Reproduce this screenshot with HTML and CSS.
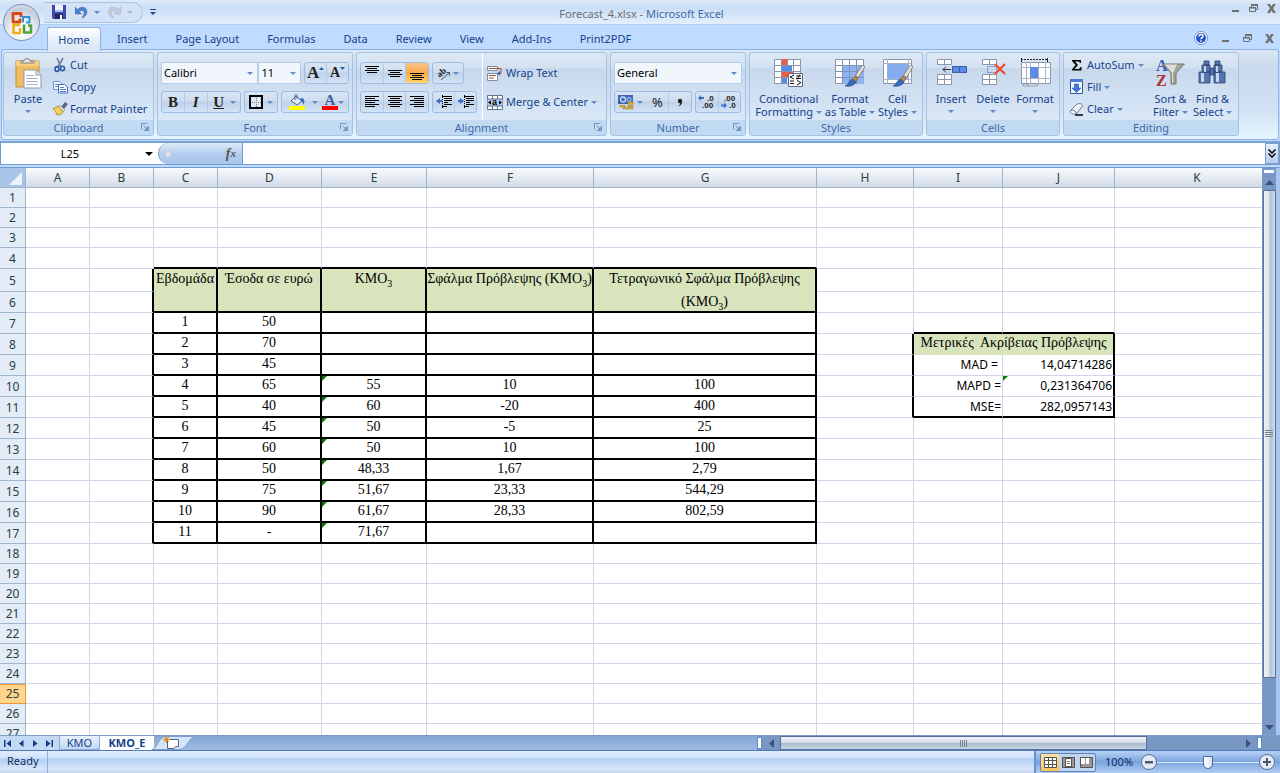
FILE: index.html
```html
<!DOCTYPE html>
<html lang="en">
<head>
<meta charset="utf-8">
<title>Forecast_4.xlsx - Microsoft Excel</title>
<link rel="stylesheet" href="styles.css">
</head>
<body>
<svg class="defs" aria-hidden="true">
  <symbol id="i-launch" viewBox="0 0 9 9"><path d="M.5 7V.5H7" fill="none" stroke="#5f86b8"/><path d="M3.500 8.500H8.500V3.500M3 3l3 3" fill="none" stroke="#5f86b8"/><path d="M4 7.500h3.500V4z" fill="#5f86b8"/></symbol>
  <symbol id="i-min" viewBox="0 0 9 9"><path d="M1 6h7v2H1z" fill="#707070"/></symbol>
  <symbol id="i-restore" viewBox="0 0 9 9"><path d="M2.500 3V1H8.500V5.500H7" fill="none" stroke="#707070"/><path d="M2 0h7v2H2zM0 3h7v1.500H0z" fill="#707070"/><path d="M.5 3.500h6v4h-6z" fill="none" stroke="#707070"/></symbol>
  <symbol id="i-close" viewBox="0 0 9 9"><path d="M0 0h3l1.500 2.500L6 0h3L6 4.300 9 9H6L4.500 6.300 3 9H0l3-4.700z" fill="#707070"/></symbol>
  <symbol id="i-brush" viewBox="0 0 20 22"><path d="M17.500 0l2.500 1.500-6.500 11-3-2z" fill="#e9e4dc" stroke="#77716a" stroke-width=".8"/><path d="M10 11l3 2-2 4-4-2z" fill="#b98a45" stroke="#74562c" stroke-width=".6"/><path d="M7 14l4 3c-2 4-6 4.500-11 4 4-1 3-5 7-7z" fill="#3c6bb8" stroke="#254d8f" stroke-width=".7"/></symbol>
</svg>

<header class="titlebar">
  <button class="office" aria-label="Office menu">
    <svg width="24" height="24" viewBox="0 0 24 24" fill="none" stroke-linejoin="round">
      <path d="M10 7.500V11H3V2.500h8V6" stroke="#d9480f" stroke-width="2.800"/>
      <path d="M14 10.500h-1V6h6.500v5.500H16" stroke="#2f8fd8" stroke-width="2"/>
      <path d="M10 14H3.500v8H10v-5" stroke="#f2b01e" stroke-width="2.600"/>
      <path d="M14 13.500v8h7v-7h-3" stroke="#4fa33a" stroke-width="2.600"/>
    </svg>
  </button>
  <div class="qat">
    <button aria-label="Save"><svg width="14" height="14" viewBox="0 0 14 14"><path d="M0 0h14v14H1l-1-1z" fill="#4146a8"/><path d="M3 0h8v7H3z" fill="#eef3ff"/><path d="M3 5h8v2H3z" fill="#a8c0f0"/><path d="M3 9h8v5H3z" fill="#20265c"/><path d="M8 10h2v4H8z" fill="#fff"/></svg></button>
    <button class="undo" aria-label="Undo"><svg width="13" height="13" viewBox="0 0 13 13"><path d="M0 1v7h6.500L4.500 6C7 3 10 5 9 8c-.4 1.500-1 2.500-2 4 3-1 5-3.500 5-6.500C12 1 6-.5 2.500 3.500z" fill="#4c82d0" stroke="#2f62b2" stroke-width=".5"/></svg></button>
    <i class="caret"></i>
    <button class="redo" aria-label="Redo"><svg width="13" height="13" viewBox="0 0 13 13"><path d="M12.500 1v7H6l2-2C5.500 3 2.500 5 3.500 8c.4 1.500 1 2.500 2 4-3-1-5-3.500-5-6.500C.5 1 6.500-.5 10 3.500z" fill="#c2cddd" stroke="#a2b1c7" stroke-width=".6"/></svg></button>
    <i class="caret pale"></i>
  </div>
  <button class="custom" aria-label="Customize toolbar"><svg width="6" height="6" viewBox="0 0 6 6"><path d="M0 0h6v1H0zM0 3h6L3 6z" fill="#2c4a80"/></svg></button>
  <h1 class="title"><span>Forecast_4.xlsx -</span> Microsoft Excel</h1>
  <div class="winbtns">
    <button aria-label="Minimize"><svg width="9" height="9"><use href="#i-min"/></svg></button>
    <button aria-label="Restore"><svg width="9" height="9"><use href="#i-restore"/></svg></button>
    <button aria-label="Close"><svg width="9" height="9"><use href="#i-close"/></svg></button>
  </div>
</header>

<nav class="tabs">
  <button class="tab active">Home</button>
  <button class="tab">Insert</button>
  <button class="tab">Page Layout</button>
  <button class="tab">Formulas</button>
  <button class="tab">Data</button>
  <button class="tab">Review</button>
  <button class="tab">View</button>
  <button class="tab">Add-Ins</button>
  <button class="tab">Print2PDF</button>
  <div class="docbtns">
    <button aria-label="Help"><svg width="14" height="14" viewBox="0 0 14 14"><circle cx="7" cy="7" r="6.500" fill="#fff" stroke="#6d93cf"/><circle cx="7" cy="7" r="5" fill="#1f55cc"/><path d="M5 5.500C5 3 9 3 9 5.200 9 6.800 7 6.500 7 8.300M7 9.300v1.400" fill="none" stroke="#fff" stroke-width="1.500"/></svg></button>
    <button aria-label="Minimize workbook"><svg width="9" height="9"><use href="#i-min"/></svg></button>
    <button aria-label="Restore workbook"><svg width="9" height="9"><use href="#i-restore"/></svg></button>
    <button aria-label="Close workbook"><svg width="9" height="9"><use href="#i-close"/></svg></button>
  </div>
</nav>

<div class="ribbon">
  <section class="group g-clip">
    <div class="body">
      <button class="big w40"><svg width="28" height="32" viewBox="0 0 28 32"><path d="M2 3h23v26H2z" fill="#efbd62" stroke="#c28d38"/><path d="M2 3h23v5H2z" fill="#f6cf85"/><path d="M7 5V3h3c0-3 6-3 6 0h4v2z" fill="#e6e6e6" stroke="#7a7a7a"/><path d="M10 12h12l5 5v13H10z" fill="#fff" stroke="#8d9ab0"/><path d="M22 12v5h5" fill="#dfe6f2" stroke="#8d9ab0"/><path d="M12 17.500h8M12 20.500h12M12 23.500h12M12 26.500h12" stroke="#a7b3c6"/></svg><span>Paste</span><i class="caret"></i></button>
      <div class="stack">
        <button class="item"><svg width="16" height="16" viewBox="0 0 16 16"><path d="M5 1l4 9M11 1L6 10" stroke="#6b7f9e" stroke-width="1.600" fill="none"/><ellipse cx="5" cy="12" rx="2" ry="2.400" fill="none" stroke="#2a58a8" stroke-width="1.600"/><ellipse cx="10.500" cy="11.500" rx="2" ry="2.200" fill="none" stroke="#2a58a8" stroke-width="1.600"/></svg>Cut</button>
        <button class="item"><svg width="16" height="16" viewBox="0 0 16 16"><path d="M1.500 2.500h6l2 2v6h-8z" fill="#f5f9ff" stroke="#6d93cf"/><path d="M3 5.500h4M3 7.500h5" stroke="#6d93cf"/><path d="M6.500 5.500h6l3 2.500v6h-9z" fill="#fff" stroke="#3e6cba"/><path d="M8 8.500h4M8 10.500h6M8 12.500h6" stroke="#5280ca"/></svg>Copy</button>
        <button class="item"><svg width="16" height="16" viewBox="0 0 16 16"><path d="M13 1l3 2-4 5-3-2z" fill="#5a6482"/><path d="M8 4l5 5-2 2-5-5z" fill="#d7d7d7" stroke="#888" stroke-width=".6"/><path d="M6 5L1 8c2 1 3 3 4 6 3 0 5-1 6-3z" fill="#f2d15c" stroke="#a8801c" stroke-width=".8"/></svg>Format Painter</button>
      </div>
    </div>
    <footer><h2>Clipboard</h2><button class="launch" aria-label="Clipboard options"><svg width="8" height="8"><use href="#i-launch"/></svg></button></footer>
  </section>

  <section class="group g-font">
    <div class="body rows">
      <div class="row">
        <div class="combo wide"><select aria-label="Font"><option>Calibri</option></select><i class="caret"></i></div>
        <div class="combo small"><select aria-label="Font size"><option>11</option></select><i class="caret"></i></div>
        <div class="bar growth"><button class="glyph grow" aria-label="Grow font">A<svg width="5" height="12"><path d="M0 3l2.500-3L5 3z" fill="#2f5aa6"/></svg></button><button class="glyph shrink" aria-label="Shrink font">A<svg width="5" height="12"><path d="M0 0h5L2.500 3z" fill="#2f5aa6"/></svg></button></div>
      </div>
      <div class="row spaced">
        <div class="bar biu"><button class="glyph b">B</button><button class="glyph it">I</button><button class="glyph u">U</button><i class="caret"></i></div>
        <div class="bar brd"><button aria-label="Borders"><svg width="14" height="14" viewBox="0 0 14 14"><path d="M1 1h12v12H1z" fill="#dce8f8" stroke="#000" stroke-width="2"/><path d="M3 7.500h9M7.500 3v9" stroke="#777" stroke-dasharray="1 1"/></svg></button><i class="caret"></i></div>
        <div class="bar cols"><button aria-label="Fill color"><svg width="17" height="16" viewBox="0 0 17 16"><path d="M0 12h16v4H0z" fill="#ff0"/><path d="M7 2l6 5-5 4-6-4z" fill="#dfeaf8" stroke="#51668c"/><path d="M6 6V1.500C6 0 8 0 8 2v3" fill="none" stroke="#51668c"/><path d="M12 4c4 0 4 4 2.500 6.500C13.500 9 14 7 11 6z" fill="#3c6cc0"/></svg></button><i class="caret"></i><button class="glyph fcol" aria-label="Font color">A</button><i class="caret"></i></div>
      </div>
    </div>
    <footer><h2>Font</h2><button class="launch" aria-label="Font options"><svg width="8" height="8"><use href="#i-launch"/></svg></button></footer>
  </section>

  <section class="group g-align">
    <div class="body">
      <div class="rows">
        <div class="row spaced">
          <div class="bar three"><button aria-label="Top align"><svg width="14" height="16"><path d="M0 1.500h14M2 3.500h10M0 5.500h14M2 7.500h10" stroke="#000"/></svg></button><button aria-label="Middle align"><svg width="14" height="16"><path d="M0 5.500h14M2 7.500h10M0 9.500h14M2 11.500h10" stroke="#000"/></svg></button><button class="on" aria-label="Bottom align"><svg width="14" height="16"><path d="M0 8.500h14M2 10.500h10M0 12.500h14M2 14.500h10" stroke="#000"/></svg></button></div>
          <div class="bar ori"><button aria-label="Orientation"><svg width="18" height="18" viewBox="0 0 18 18"><text x="3" y="11" transform="rotate(-40 8 9)" class="abt">ab</text><path d="M7 16L15.500 8.500M15.500 8.500h-3M15.500 8.500v3" fill="none" stroke="#555"/></svg></button><i class="caret"></i></div>
        </div>
        <div class="row spaced">
          <div class="bar three"><button aria-label="Align left"><svg width="14" height="12"><path d="M0 .5h14M0 2.500h10M0 4.500h14M0 6.500h10M0 8.500h14M0 10.500h10" stroke="#000"/></svg></button><button aria-label="Center"><svg width="14" height="12"><path d="M0 .5h14M2 2.500h10M0 4.500h14M2 6.500h10M0 8.500h14M2 10.500h10" stroke="#000"/></svg></button><button aria-label="Align right"><svg width="14" height="12"><path d="M0 .5h14M4 2.500h10M0 4.500h14M4 6.500h10M0 8.500h14M4 10.500h10" stroke="#000"/></svg></button></div>
          <div class="bar two"><button aria-label="Decrease indent"><svg width="16" height="14" viewBox="0 0 16 14"><path d="M6.500 0v14" stroke="#000" stroke-dasharray="1 1"/><path d="M6 1.500h10M8 3.500h8M8 5.500h8M8 7.500h4M8 9.500h8M6 11.500h5" stroke="#000"/><path d="M0 6l4-3v2h2v2H4v2z" fill="#3c6cc8"/></svg></button><button aria-label="Increase indent"><svg width="16" height="14" viewBox="0 0 16 14"><path d="M6.500 0v14" stroke="#000" stroke-dasharray="1 1"/><path d="M6 1.500h10M8 3.500h8M8 5.500h8M8 7.500h4M8 9.500h8M6 11.500h5" stroke="#000"/><path d="M6 6L2 3v2H0v2h2v2z" fill="#3c6cc8"/></svg></button></div>
        </div>
      </div>
      <div class="rows merge">
        <button class="item"><svg width="16" height="15" viewBox="0 0 16 15"><path d="M.5.5h10v4H.5zM.5 7.500h10v7H.5z" fill="#fff" stroke="#7f8ca3"/><path d="M2 2.500h12v5h-2" fill="none" stroke="#a0522d"/><path d="M13 5l-3 2.500 3 2z" fill="#2f5aa6"/><path d="M2 9.500h7M2 12h5" stroke="#a0522d"/></svg>Wrap Text</button>
        <button class="item"><svg width="16" height="15" viewBox="0 0 16 15"><path d="M.5.500h15v14H.5z" fill="#fff" stroke="#60728f"/><path d="M5.500.5v3.500M10.500.5v3.500M5.500 11v3.500M10.500 11v3.500" stroke="#60728f"/><path d="M0 4h16v7H0z" fill="#b7cdec" stroke="#60728f"/><path d="M1 7.500l3-2v4zM15 7.500l-3-2v4z" fill="#000"/><text x="5" y="10" class="at">a</text></svg>Merge &amp; Center<i class="caret"></i></button>
      </div>
    </div>
    <footer><h2>Alignment</h2><button class="launch" aria-label="Alignment options"><svg width="8" height="8"><use href="#i-launch"/></svg></button></footer>
  </section>

  <section class="group g-num">
    <div class="body rows">
      <div class="row"><div class="combo full"><select aria-label="Number format"><option>General</option></select><i class="caret"></i></div></div>
      <div class="row spaced">
        <div class="bar cur"><button aria-label="Currency"><svg width="16" height="16" viewBox="0 0 16 16"><path d="M0 1h15v9H0z" fill="#3d69b4"/><circle cx="5" cy="5.500" r="2.500" fill="none" stroke="#c8daf6" stroke-width="1.300"/><circle cx="11" cy="5.500" r="2" fill="none" stroke="#c8daf6"/><path d="M10 8h5v2h-5zM10 11h5v1.500h-5zM9 13.500h6v1.500H9zM2 11.500h5v1.500H2zM5 13.500h3V15H5z" fill="#f0c030" stroke="#9a6e10" stroke-width=".5"/></svg></button><i class="caret"></i><button class="glyph pct">%</button><button aria-label="Comma style"><svg width="6" height="9"><circle cx="3" cy="3" r="2.200" fill="#222"/><path d="M5.200 3c0 3-1.500 4.500-3.700 5.500 1.200-1.500 1.700-2.500 1.500-4z" fill="#222"/></svg></button></div>
        <div class="bar dec"><button aria-label="Increase decimal"><svg width="18" height="16" viewBox="0 0 18 16"><path d="M0 4l3-3v2h3v2H3v2z" fill="#3c6cc8"/><text x="9" y="7" class="dt">.0</text><text x="4" y="14" class="dt">.00</text></svg></button><button aria-label="Decrease decimal"><svg width="18" height="16" viewBox="0 0 18 16"><path d="M7 11.500l-3-3v2H1v2h3v2z" fill="#3c6cc8"/><text x="4" y="7" class="dt">.00</text><text x="9" y="14" class="dt">.0</text></svg></button></div>
      </div>
    </div>
    <footer><h2>Number</h2><button class="launch" aria-label="Number options"><svg width="8" height="8"><use href="#i-launch"/></svg></button></footer>
  </section>

  <section class="group g-styles">
    <div class="body bigs">
      <button class="big w70"><svg width="31" height="30" viewBox="0 0 31 30"><path d="M1.500 1.500h26v24h-26z" fill="#fff" stroke="#8896ae"/><path d="M8 1h6v24H8z" fill="#f15b40"/><path d="M8 7h11v6H8z" fill="#5a8ae8"/><path d="M8 13h12v6H8z" fill="#f15b40"/><path d="M8 19h6v6H8z" fill="#5a8ae8"/><path d="M1 7.500h27M1 13.500h27M1 19.500h27M8.500 1v25M14.500 1v6M20.500 1v25" stroke="#8896ae" fill="none"/><path d="M15.500 15.500h14v13h-14z" fill="#fff" stroke="#5d6b84"/><path d="M21 17l-4 2 4 2M17 23h4M23 18h5M23 20.500h5M27 16.500l-3 5M24 22.500l4 2-4 2.500M17 25.500h4" fill="none" stroke="#111"/></svg><span>Conditional</span><span>Formatting <i class="caret"></i></span></button>
      <button class="big w50"><svg width="31" height="30" viewBox="0 0 31 30"><path d="M1.500 1.500h28v24h-28z" fill="#fff" stroke="#8896ae"/><path d="M8 7h22v19H8z" fill="#8fb2f0"/><path d="M1 7.500h29M1 13.500h29M1 19.500h29M8.500 1v25M15.500 1v25M22.500 1v25" stroke="#7f93b8"/><use href="#i-brush" x="11" y="7" width="20" height="22"/></svg><span>Format</span><span>as Table <i class="caret"></i></span></button>
      <button class="big w40"><svg width="31" height="30" viewBox="0 0 31 30"><path d="M1.500 1.500h28v24h-28z" fill="#fff" stroke="#8896ae"/><path d="M1 5.500h29M1 21.500h29M5.500 1v25M26.500 1v25" stroke="#a5b0c6"/><path d="M6 6h20v15H6z" fill="#86acf0"/><use href="#i-brush" x="11" y="7" width="20" height="22"/></svg><span>Cell</span><span>Styles <i class="caret"></i></span></button>
    </div>
    <footer><h2>Styles</h2></footer>
  </section>

  <section class="group g-cells">
    <div class="body bigs">
      <button class="big w40"><svg width="31" height="30" viewBox="0 0 31 30"><path d="M1.500 1.500h14v5h-14zM1.500 16.500h14v10h-14z" fill="#fff" stroke="#8896ae"/><path d="M8.500 1v6M8.500 16v11M1 21.500h15" stroke="#8896ae"/><path d="M16.500 8.500h14v6h-14z" fill="#5c8be6" stroke="#3a5da6"/><path d="M23.500 8v7" stroke="#3a5da6"/><path d="M7 11.500h8M10 8.500l-3 3 3 3" fill="none" stroke="#333"/></svg><span>Insert</span><i class="caret"></i></button>
      <button class="big w40"><svg width="31" height="30" viewBox="0 0 31 30"><path d="M4.500 1.500h14v5h-14zM4.500 16.500h14v10h-14z" fill="#fff" stroke="#8896ae"/><path d="M11.500 1v6M11.500 16v11M4 21.500h15" stroke="#8896ae"/><path d="M9.500 8.500h9v6h-9z" fill="none" stroke="#3a5da6" stroke-dasharray="1 1"/><path d="M17 6l10 10M27 6L17 16" stroke="#f04a2a" stroke-width="2.200"/></svg><span>Delete</span><i class="caret"></i></button>
      <button class="big w40"><svg width="31" height="30" viewBox="0 0 31 30"><path d="M1 1.500h27" stroke="#222" stroke-dasharray="2 1"/><path d="M1.500 0v4M27.500 0v4" stroke="#222"/><path d="M1.500 4.500h29v21h-29z" fill="#fff" stroke="#8896ae"/><path d="M1 9.500h30M1 20.500h30M6.500 4v22M10.500 4v22M18.500 4v22M25.500 4v22" stroke="#a5b0c6"/><path d="M10 9h8v11h-8z" fill="#5c8be6"/><path d="M3 26h5l1 2h8l1-2h-8M3 26v2h6" fill="#fff" stroke="#8896ae"/></svg><span>Format</span><i class="caret"></i></button>
    </div>
    <footer><h2>Cells</h2></footer>
  </section>

  <section class="group g-edit">
    <div class="body">
      <div class="stack">
        <button class="item"><svg width="15" height="16" viewBox="0 0 15 16"><path d="M3 3h9v3h-1L10 4.500H6L9 8l-3.500 4H10l1.500-2h1v3.500H3V12.500L6.500 8 3 4z" fill="#000"/></svg>AutoSum <i class="caret"></i></button>
        <button class="item"><svg width="15" height="16" viewBox="0 0 15 16"><path d="M1.500.5h12v14h-12z" fill="#f3f8ff" stroke="#35589c"/><path d="M1 0h13v3H1z" fill="#4d7ad0"/><path d="M5.500 5h4v4H12l-4.500 4.500L3 9h2.500z" fill="#3f76dc" stroke="#2452a8" stroke-width=".6"/></svg>Fill <i class="caret"></i></button>
        <button class="item"><svg width="15" height="16" viewBox="0 0 15 16"><path d="M1 10l7-7c3-1 6 0 5.500 2L8 12c-3 2-7 1-7-2z" fill="#f2f4f8" stroke="#6c7a92"/><path d="M1.500 9.500c2-1 5 0 6 2.500" fill="none" stroke="#6c7a92"/><path d="M6 14h8" stroke="#000" stroke-width="1.500"/></svg>Clear <i class="caret"></i></button>
      </div>
      <button class="big w40 sort"><svg width="31" height="30" viewBox="0 0 31 30"><text x="1" y="13" class="sa">A</text><text x="1" y="28" class="sz">Z</text><path d="M7.500 6h22L21 15v11h-5V15z" fill="#a4a49c" stroke="#77776f"/><path d="M10 6.500h12L18 15v10h-1V15z" fill="#deded8"/></svg><span>Sort &amp;</span><span>Filter <i class="caret"></i></span></button>
      <button class="big w40"><svg width="31" height="30" viewBox="0 0 31 30"><path d="M7 3h5v4h-5zM18 3h5v4h-5zM5 7h8v7H5zM17 7h8v7h-8zM2 14h11v11H2zM17 14h11v11H17zM13 10h4v7h-4z" fill="#5475ac" stroke="#2c4474" stroke-width=".8"/><path d="M4 15h3v9H4zM19 15h3v9h-3zM7 8h2v6H7zM19 8h2v6h-2z" fill="#c7d7f2"/></svg><span>Find &amp;</span><span>Select <i class="caret"></i></span></button>
    </div>
    <footer><h2>Editing</h2></footer>
  </section>
</div>

<div class="formulabar">
  <div class="namebox"><input type="text" value="L25" aria-label="Name box"><i class="caret black"></i></div>
  <div class="fx"><span class="knob"></span><button>f<sub>x</sub></button></div>
  <input class="formula" type="text" aria-label="Formula">
  <button class="expand" aria-label="Expand formula bar"><svg width="8" height="9" viewBox="0 0 8 9"><path d="M.5.5L4 4 7.500.5M.5 4.500L4 8l3.500-3.500" fill="none" stroke="#000" stroke-width="1.500"/></svg></button>
</div>

<main class="work">
  <div class="sheet"><table class="grid"><colgroup id="cols"></colgroup><thead><tr id="letters"></tr></thead><tbody id="cells"></tbody></table></div>
  <div class="vscroll" role="scrollbar" aria-controls="cells" aria-valuenow="0">
    <span class="vsplit"></span>
    <button aria-label="Scroll up"><svg width="9" height="5"><path d="M0 5L4.500 0 9 5z" fill="#3d4f7c"/></svg></button>
    <div class="vthumb"><span></span></div>
    <button aria-label="Scroll down" class="down"><svg width="9" height="5"><path d="M0 0h9L4.500 5z" fill="#3d4f7c"/></svg></button>
  </div>
</main>

<div class="sheetbar">
  <div class="navs">
    <button aria-label="First sheet"><svg width="7" height="7"><path d="M0 0h1.500v7H0zM7 0v7L2.500 3.500z" fill="#123c86"/></svg></button>
    <button aria-label="Previous sheet"><svg width="7" height="7"><path d="M5.500 0v7L1 3.500z" fill="#123c86"/></svg></button>
    <button aria-label="Next sheet"><svg width="7" height="7"><path d="M1 0v7l4.500-3.500z" fill="#123c86"/></svg></button>
    <button aria-label="Last sheet"><svg width="7" height="7"><path d="M0 0v7l4.500-3.500zM5.500 0H7v7H5.500z" fill="#123c86"/></svg></button>
  </div>
  <button class="stab">KMO</button>
  <button class="stab current">KMO_E</button>
  <button class="newtab" aria-label="Insert worksheet"><svg width="44" height="14" viewBox="0 0 44 14"><path d="M0 13.500C6 12 6 1 14 .5h29C36 2 36 12 28 13.500z" fill="#d5e4f8" stroke="#7f9fcd"/><path d="M15.500 3.500h11v7h-3l-1.500 2h-6.500z" fill="#fff" stroke="#54688f"/><path d="M14.500 0v7M11 3.500h7M12 1l5 5M17 1l-5 5" stroke="#e08a1c"/></svg></button>
  <div class="hscroll">
    <span class="hsplit"></span>
    <button aria-label="Scroll left"><svg width="5" height="9"><path d="M5 0v9L0 4.500z" fill="#3d4f7c"/></svg></button>
    <div class="htrack"><div class="hthumb"><span></span></div></div>
    <button aria-label="Scroll right"><svg width="5" height="9"><path d="M0 0v9l5-4.500z" fill="#3d4f7c"/></svg></button>
    <span class="hsplit"></span>
  </div>
</div>

<footer class="status">
  <span class="ready">Ready</span>
  <div class="statusright">
    <div class="views">
      <button class="on" aria-label="Normal view"><svg width="13" height="11"><path d="M.5.5h12v10H.5z" fill="#fff" stroke="#56534a"/><path d="M0 3.500h13M0 7.500h13M4.500 0v11M8.500 0v11" stroke="#56534a"/></svg></button>
      <button aria-label="Page layout view"><svg width="13" height="11"><path d="M.5.5h12v10H.5z" fill="#999" stroke="#56534a"/><path d="M3.500 1.500h6v8h-6z" fill="#fff" stroke="#56534a"/><path d="M5 4.500h3M5 6.500h3" stroke="#777"/></svg></button>
      <button aria-label="Page break view"><svg width="13" height="11"><path d="M.5.5h12v10H.5z" fill="#999" stroke="#56534a"/><path d="M1 1h4v6H1zM6 1h3v6H6z" fill="#fff"/></svg></button>
    </div>
    <button class="pctbtn">100%</button>
    <button class="round" aria-label="Zoom out"><svg width="16" height="16"><circle cx="8" cy="8" r="7.500" fill="#e3ebf6" stroke="#5a6f92"/><path d="M4 7h8v2.500H4z" fill="#4a5872"/></svg></button>
    <input type="range" min="0" max="100" value="50" aria-label="Zoom">
    <button class="round" aria-label="Zoom in"><svg width="16" height="16"><circle cx="8" cy="8" r="7.500" fill="#e3ebf6" stroke="#5a6f92"/><path d="M4 7h3V4h2v3h3v2H9v3H7V9H4z" fill="#4a5872"/></svg></button>
  </div>
</footer>
<script src="sheet.js"></script>
</body>
</html>
```

FILE: styles.css
```css
* { box-sizing: border-box; }
html, body { height: 100%; margin: 0; }
body {
  display: flex; flex-direction: column; overflow: hidden;
  background: #bfdbff; color: #15428b;
  font: 11px/14px "Noto Sans", "Liberation Sans", sans-serif;
}
button, input, select {
  font: inherit; color: inherit; background: none; border: 0; padding: 0; margin: 0;
}
button { display: flex; align-items: center; justify-content: center; white-space: nowrap; }
h1, h2 { font: inherit; margin: 0; }
svg { display: block; flex: none; }
.defs { position: absolute; width: 0; height: 0; }
.caret {
  display: inline-block; flex: none; width: 0; height: 0;
  border: 3px solid transparent; border-top-color: #5f8cc4; border-bottom: 0;
}
.caret.pale { border-top-color: #a9b9d0; }
.caret.black { border-width: 4px; border-top-color: #000; border-bottom: 0; }

/* title bar */
.titlebar {
  position: relative; flex: none; height: 25px; display: flex; align-items: center;
  padding: 0 4px 0 44px;
  background: linear-gradient(#dfebfa, #d3e3f9 4px, #cadef7 8px, #e4effd);
  border-bottom: 1px solid #b0cff7;
}
.office {
  position: absolute; z-index: 2; left: 3px; top: 4px; width: 37px; height: 37px;
  border-radius: 50%; border: 1px solid #7d8fae;
  background: radial-gradient(circle at 50% 75%, #fff, #eef1f6 35%, #c4cddc 70%, #f4f6fa);
}
.qat {
  display: flex; align-items: center; height: 21px; width: 99px; padding-left: 8px; gap: 6px;
  background: #d3e2f6; border: 1px solid #a9c4e8; border-left: 0; border-radius: 0 11px 11px 0;
}
.qat .undo { margin-left: 3px; }
.qat .redo { margin-left: 2px; }
.custom { margin-left: 7px; }
.title { flex: 1; text-align: center; color: #3e6aaa; padding: 4px 104px 0 0; }
.title span { color: #6b6e75; }
.winbtns { display: flex; gap: 9px; align-self: flex-start; padding-top: 4px; }

/* ribbon tabs */
.tabs { flex: none; display: flex; height: 24px; padding: 2px 6px 0 47px; background: #bfdbff; }
.tab { padding: 0 14px; height: 23px; }
.tab.active {
  position: relative; z-index: 1; width: 54px; padding: 0; height: 24px; margin-right: 2px;
  background: linear-gradient(#fff, #e6effa 50%, #dbe6f4);
  border: 1px solid #8db2e3; border-bottom: 0; border-radius: 3px 3px 0 0;
}
.docbtns { margin-left: auto; display: flex; align-items: center; gap: 13px; }

/* ribbon */
.ribbon {
  flex: none; display: flex; gap: 3px; height: 91px; margin: 0 1px; padding: 2px 1px 3px;
  border: 1px solid #8db2e3; border-radius: 3px;
  background: linear-gradient(#dbe6f4, #c9d9ed 18px, #d2e1f3 60px, #e3f4ff 85px);
}
.group {
  display: flex; flex-direction: column; border: 1px solid #a5c1e3; border-radius: 3px;
  background: linear-gradient(#dde8f5, #d4e1f1 14px, #c8d8ec 16px, #d9e7f7 66px);
}
.g-clip { width: 151px; }
.g-font { width: 196px; }
.g-align { width: 251px; }
.g-num { width: 136px; }
.g-styles { width: 174px; }
.g-cells { width: 134px; }
.g-edit { width: 176px; }
.group .body { flex: 1; display: flex; padding: 0 3px; }
.group footer {
  flex: none; height: 15px; display: flex; align-items: center; justify-content: center;
  background: #c1d9f1; color: #3e6aaa; border-radius: 0 0 3px 3px;
}
.group footer h2 { flex: 1; text-align: center; }
.launch { margin: 0 4px 2px -12px; }
.big { flex-direction: column; justify-content: flex-start; padding-top: 5px; line-height: 13px; }
.big svg { margin-bottom: 4px; }
.g-clip .big svg { margin-bottom: 2px; }
.big > .caret { margin-top: 5px; }
.bigs { justify-content: space-around; }
.big .caret { vertical-align: 2px; }
.w70 { width: 70px; }
.w50 { width: 50px; }
.w40 { width: 42px; }
.stack { display: flex; flex-direction: column; justify-content: space-between; padding: 3px 0 2px; }
.g-clip .stack { margin-left: 3px; }
.g-edit .stack { margin-left: 2px; }
.sort { margin-left: 6px; }
.item { justify-content: flex-start; gap: 3px; height: 18px; }
.g-clip .item { gap: 2px; }
.body.rows { padding: 9px 3px 0; }
.rows, .body.rows { display: flex; flex-direction: column; gap: 7px; }
.g-align .rows { padding-top: 9px; }
.row { display: flex; }
.spaced { gap: 3px; }
.combo {
  display: flex; align-items: center; height: 22px; padding: 0 4px 0 2px;
  background: #f1f6fc; border: 1px solid #b3cdec; color: #000;
}
.combo select { appearance: none; flex: 1; min-width: 0; }
.wide { width: 98px; }
.combo.small { width: 43px; }
.full { width: 128px; }
.bar {
  display: flex; align-items: center; height: 22px;
  border: 1px solid #9dbce2; border-radius: 3px;
  background: linear-gradient(#d8e5f5, #cddcee 45%, #bfd1e9 50%, #d3e3f6);
}
.bar button { height: 20px; flex: 1; }
.bar button + button { border-left: 1px solid #b5cae5; }
.bar .caret { margin-right: 4px; }
.growth { width: 45px; margin-left: 3px; }
.biu { width: 80px; }
.brd { width: 35px; }
.cols { width: 68px; }
.three { width: 69px; }
.ori { width: 32px; }
.two { width: 45px; }
.cur { width: 78px; }
.dec { width: 46px; }
.bar .on { background: linear-gradient(#f8c48a, #fba94c 50%, #ffd76b); }
.glyph { font: bold 15px/18px "Liberation Serif", serif; color: #222; }
.grow { font-size: 17px; }
.shrink { font-size: 14px; }
.it { font-style: italic; }
.u { text-decoration: underline; }
.fcol { color: #3c5f9e; line-height: 13px; }
.bar .fcol { flex: none; width: 16px; height: 16px; border: 0; border-bottom: 4px solid #f00; }
.pct { font: 13px "Noto Sans", sans-serif; }
.abt { font: bold 9px "Liberation Serif", serif; fill: #222; }
.at { font: bold 9px "Liberation Sans", sans-serif; fill: #000; }
.dt { font: bold 8px "Liberation Sans", sans-serif; fill: #222; }
.sa { font: bold 16px "Liberation Serif", serif; fill: #2e5cb4; }
.sz { font: bold 16px "Liberation Serif", serif; fill: #a83232; }
.merge { border-left: 1px solid #fff; margin: 0 0 0 5px; padding-left: 4px; }
.merge .item { height: 22px; }

/* formula bar */
.formulabar {
  flex: none; display: flex; height: 24px; margin-top: 1px; color: #000;
  background: #fff; border: 2px solid #6f9bd0; border-width: 2px 1px 1px; border-top-color: #7ba2cf;
}
.namebox { display: flex; align-items: center; width: 157px; padding-right: 5px; }
.namebox input { flex: 1; min-width: 0; text-align: center; padding-right: 6px; }
.fx {
  display: flex; justify-content: space-between; align-items: center; width: 85px; padding: 0 6px 0 5px;
  background: linear-gradient(#dce9f8, #b2ccee 55%, #a9c5ea); border-right: 1px solid #6f9bd0;
  border-left: 1px solid #7d9fce; border-radius: 10px 0 0 10px;
}
.knob { width: 8px; height: 8px; border-radius: 50%; background: radial-gradient(#eee, #aebbd0); }
.fx button { font: italic bold 14px/16px "Liberation Serif", serif; color: #555; }
.fx sub { font-size: 11px; line-height: 11px; }
.formula { flex: 1; min-width: 0; padding: 0 4px; }
.expand { width: 14px; background: linear-gradient(#e6effa, #b7cdea); border: 1px solid #7d9fce; }

/* worksheet */
.work { flex: 1; min-height: 0; display: flex; margin-top: 2px; border-top: 1px solid #6f9bd0; }
.sheet { flex: 1; min-width: 0; overflow: hidden; background: #fff; }
.grid { width: calc(100% + 18px); table-layout: fixed; border-collapse: separate; border-spacing: 0; color: #000; }
.grid th, .grid td { padding: 0; border: 0 solid #d0d5ea; border-width: 0 1px 1px 0; overflow: hidden; white-space: nowrap; }
.grid th { font: 12px/16px "Noto Sans", sans-serif; color: #27413e; border-color: #9eb6ce; padding-top: 1px; }
.grid thead th { height: 20px; background: linear-gradient(#f8fafc, #e3e8f1 60%, #d3dbe9); }
.grid tbody th { background: #e4ecf7; }
.grid tbody th.sel { background: #ffd58d; border-color: #f29536; box-shadow: inset 0 1px #f29536; }
.grid thead .corner { background: #a9c4e9; }
.corner svg { margin: 0 0 0 9px; }
.grid td { position: relative; font: 14px/18px "Liberation Serif", serif; text-align: center; vertical-align: top; }
.grid td.box { border-color: #000; border-right-width: 2px; border-bottom-width: 2px; }
.grid td.bl { border-right: 2px solid #000; }
.grid td.bt { border-bottom: 2px solid #000; }
.grid td.head { background: #d8e4bc; line-height: 19px; }
.grid td.title2 { border-right: 2px solid #000; border-bottom: 0; background: #d8e4bc; }
.grid td.head.tall { white-space: normal; padding: 0 10px; }
.tall span { display: block; margin-top: 4px; }
.grid td sub { font-size: 10px; line-height: 1px; }
.grid td.num { font: 12px/18px "Noto Sans", sans-serif; text-align: right; padding: 1px 1px 0 0; }
.grid td.flag::before {
  content: ""; position: absolute; left: 0; top: 0;
  border: 5px solid #008000; border-width: 5px 5px 0 0; border-right-color: transparent;
}
.vscroll {
  flex: none; width: 18px; display: flex; flex-direction: column; align-items: center;
  padding: 0 0 4px; background: #7897c2; border-right: 4px solid #a9c6ee;
}
.vsplit { width: 12px; height: 5px; margin-top: 1px; background: #fff; border: 1px solid #6f9bd0; }
.vscroll button { height: 16px; }
.vthumb {
  height: 488px; width: 13px; border: 1px solid #5a6f9a; border-radius: 1px;
  display: flex; align-items: center; justify-content: center;
  background: linear-gradient(90deg, #eef1f5, #dfe5ed 40%, #b4c3d6 60%, #d6dfea);
}
.vthumb span { width: 8px; height: 8px; background: repeating-linear-gradient(#7a8290 0 1px, transparent 1px 2px); }
.vscroll .down { margin-top: auto; height: 8px; }

/* sheet tabs */
.sheetbar {
  flex: none; display: flex; height: 16px; background: linear-gradient(#84a6d2, #9fbbe2);
  border-top: 1px solid #7b9dcb; border-bottom: 1px solid #4a7abd;
}
.navs { display: flex; width: 59px; padding-left: 4px; gap: 7px; background: #c4d9f4; }
.stab { width: 41px; background: linear-gradient(#e8f1fc, #c2d8f4); border: 1px solid #8aa9d4; border-top: 0; border-radius: 0 0 4px 0; }
.current { width: 54px; background: #fff; font-weight: 700; border: 0; }
.newtab { margin-left: -2px; }
.hscroll { display: flex; align-items: center; margin-left: auto; width: 523px; padding-right: 18px; background: #7897c2; }
.hsplit { width: 5px; height: 12px; background: #fff; border: 1px solid #5f8cc4; }
.hscroll button { width: 18px; }
.htrack { flex: 1; }
.hthumb {
  width: 80%; height: 14px; display: flex; align-items: center; justify-content: center;
  border: 1px solid #5a6f9a; background: linear-gradient(#eef1f7, #d5dfea 45%, #a9bccf 55%, #c9d6e2);
}
.hthumb span { width: 8px; height: 7px; background: repeating-linear-gradient(90deg, #7a8290 0 1px, transparent 1px 2px); }

/* status bar */
.status {
  flex: none; height: 22px; display: flex; color: #0e2c5e;
  background: linear-gradient(#e2eefd, #cfe2fb 7px, #b2cff5 8px, #d7e6f9 18px, #c5d5ea);
}
.ready { padding: 3px 8px 0 7px; border-right: 1px solid #8eb0df; }
.statusright {
  margin-left: auto; display: flex; align-items: center; width: 246px; padding-left: 4px;
  border-left: 2px solid #6d93cf; background: linear-gradient(#b8d2f5, #86ade4 40%, #7ba5df 50%, #b1cef3);
}
.views { display: flex; width: 56px; height: 19px; border: 1px solid #5f82b5; border-radius: 2px; background: #c0d5f1; }
.views button { flex: 1; }
.views .on { background: linear-gradient(#fce3a8, #fbc25c); }
.pctbtn { margin: 0 8px 0 9px; }
.status input { appearance: none; flex: 1; min-width: 0; height: 16px; background: linear-gradient(#d9e7fa, #d9e7fa) center / 100% 1px no-repeat; }
.status input::-webkit-slider-thumb {
  appearance: none; width: 10px; height: 13px; background: linear-gradient(90deg, #fff, #d5e2f5);
  border: 1px solid #4a6796; border-radius: 1px 1px 5px 5px;
}
.status .round:last-child { margin-right: 5px; }
```

FILE: sheet.js
```js
const widths = [26, 64, 64, 64, 104, 105, 167, 223, 97, 89, 112, 0];
const letters = ["", "A", "B", "C", "D", "E", "F", "G", "H", "I", "J", "K"];
const data = {
  7: ["1", "50", "", "", ""],
  8: ["2", "70", "", "", ""],
  9: ["3", "45", "", "", ""],
  10: ["4", "65", "55", "10", "100"],
  11: ["5", "40", "60", "-20", "400"],
  12: ["6", "45", "50", "-5", "25"],
  13: ["7", "60", "50", "10", "100"],
  14: ["8", "50", "48,33", "1,67", "2,79"],
  15: ["9", "75", "51,67", "23,33", "544,29"],
  16: ["10", "90", "61,67", "28,33", "802,59"],
  17: ["11", "-", "71,67", "", ""]
};
const heads = [
  "Εβδομάδα", "Έσοδα σε ευρώ", "KMO<sub>3</sub>",
  "Σφάλμα Πρόβλεψης (KMO<sub>3</sub>)",
  "Τετραγωνικό Σφάλμα Πρόβλεψης <span>(KMO<sub>3</sub>)</span>"
];
const metrics = { 9: ["MAD =&nbsp;", "14,04714286"], 10: ["MAPD =", "0,231364706"], 11: ["MSE=", "282,0957143"] };

document.getElementById("cols").innerHTML =
  widths.map(w => w ? `<col style="width:${w}px">` : "<col>").join("");
document.getElementById("letters").innerHTML = letters.map((l, i) =>
  i ? `<th>${l}</th>` : `<th class="corner"><svg width="13" height="13"><path d="M13 0v13H0z" fill="#eef3fa"/></svg></th>`).join("");

const rowHeight = r => r === 5 ? 23 : (r === 4 || (r >= 6 && r <= 17)) ? 21 : 20;

function cell(r, c) {
  const inTable = r >= 5 && r <= 17 && c >= 3 && c <= 7;
  if (inTable && r === 5) return `<td rowspan="2" class="box head${c === 7 ? " tall" : ""}">${heads[c - 3]}</td>`;
  if (inTable && r === 6) return "";
  if (inTable) {
    const flag = c === 5 && r >= 10 ? " flag" : "";
    return `<td class="box${flag}">${data[r][c - 3]}</td>`;
  }
  if (r === 8 && c === 9) return `<td colspan="2" class="title2">Μετρικές&nbsp; Ακρίβειας Πρόβλεψης</td>`;
  if (r === 8 && c === 10) return "";
  const cls = [];
  if (c === 2 && r >= 5 && r <= 17) cls.push("bl");
  if (r === 4 && c >= 3 && c <= 7) cls.push("bt");
  if (c === 8 && r >= 8 && r <= 11) cls.push("bl");
  if (r === 7 && (c === 9 || c === 10)) cls.push("bt");
  let text = "";
  if (metrics[r] && (c === 9 || c === 10)) {
    cls.push("num");
    text = metrics[r][c - 9];
    if (c === 10) cls.push("bl");
    if (r === 11) cls.push("bt");
    if (r === 10 && c === 10) cls.push("flag");
  }
  return `<td class="${cls.join(" ")}">${text}</td>`;
}

let rows = "";
for (let r = 1; r <= 27; r++) {
  rows += `<tr style="height:${rowHeight(r)}px"><th${r === 25 ? ' class="sel"' : ""}>${r}</th>`;
  for (let c = 1; c <= 11; c++) rows += cell(r, c);
  rows += "</tr>";
}
document.getElementById("cells").innerHTML = rows;
```
